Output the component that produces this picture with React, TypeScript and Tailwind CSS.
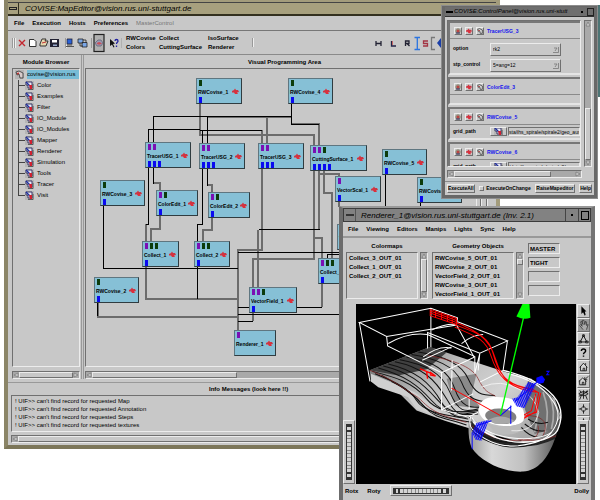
import React from "react";

const raised = "border border-t-[#ececec] border-l-[#ececec] border-b-[#707070] border-r-[#707070]";
const sunken = "border border-t-[#707070] border-l-[#707070] border-b-[#ececec] border-r-[#ececec]";
const sans = "font-['Liberation_Sans',Arial,sans-serif]";

const GREEN = "#0c3c0c";
const PURPLE = "#7a10b4";

type ModuleNode = { name: string; x: number; y: number; w: number; top: string; out: number };

const nodes: ModuleNode[] = [
  { name: "RWCovise_1", x: 196, y: 78, w: 46, top: "g", out: 1 },
  { name: "RWCovise_4", x: 288, y: 78, w: 45, top: "g", out: 1 },
  { name: "TracerUSG_1", x: 145, y: 142, w: 46, top: "pp", out: 3 },
  { name: "TracerUSG_2", x: 199, y: 143, w: 46, top: "pp", out: 3 },
  { name: "TracerUSG_3", x: 258, y: 143, w: 46, top: "pp", out: 3 },
  { name: "CuttingSurface_1", x: 310, y: 145, w: 57, top: "ppg", out: 4 },
  { name: "RWCovise_5", x: 382, y: 149, w: 45, top: "g", out: 1 },
  { name: "VectorScal_1", x: 335, y: 176, w: 46, top: "p", out: 1 },
  { name: "RWCovise_6", x: 417, y: 177, w: 45, top: "g", out: 1 },
  { name: "RWCovise_3", x: 100, y: 180, w: 45, top: "g", out: 1 },
  { name: "ColorEdit_1", x: 156, y: 190, w: 42, top: "pg", out: 1 },
  { name: "ColorEdit_2", x: 208, y: 192, w: 42, top: "pg", out: 1 },
  { name: "VectorField_2", x: 337, y: 224, w: 48, top: "p", out: 1 },
  { name: "Collect_1", x: 142, y: 241, w: 37, top: "pgg", out: 1 },
  { name: "Collect_2", x: 194, y: 241, w: 36, top: "pgg", out: 1 },
  { name: "Collect_3", x: 318, y: 258, w: 36, top: "pgg", out: 1 },
  { name: "RWCovise_2", x: 94, y: 277, w: 45, top: "g", out: 1 },
  { name: "VectorField_1", x: 249, y: 287, w: 48, top: "ppg", out: 1 },
  { name: "Renderer_1", x: 234, y: 330, w: 42, top: "p", out: 0 },
];

function Hand({ size = 7 }: { size?: number }) {
  return (
    <svg width={size} height={size} viewBox="0 0 7 7" className="shrink-0">
      <path d="M0 3L2 2L3 0.5L4 2L6 2L7 4L5 4.500L6 6L3 6L2 4.500L0 4.500Z" fill="#dc2f3c" />
      <path d="M3 2L4 3M1 3.500H2M5 3H6" stroke="#8b5060" strokeWidth="0.600" />
    </svg>
  );
}

function NodeBox({ n }: { n: ModuleNode }) {
  return (
    <div
      className="absolute flex h-[26px] flex-col justify-between overflow-hidden border border-t-[#5f7680] border-l-[#5f7680] border-b-[#303c40] border-r-[#303c40] bg-[#86c0d6] pt-px"
      style={{ left: n.x - 86, top: n.y - 69, width: n.w }}
    >
      <div className="flex h-[6px] gap-[2px] pl-[2px]">
        {n.top.split("").map((c, i) => (
          <span key={i} className="w-[3px]" style={{ background: c === "g" ? GREEN : PURPLE }} />
        ))}
      </div>
      <div className="flex items-center justify-between pr-[2px] pl-px">
        <span className="text-[5px] leading-[8px] font-bold">{n.name}</span>
        <Hand />
      </div>
      <div className="flex h-[6px] gap-[2px] pl-[2px]">
        {Array.from({ length: n.out }, (_, i) => (
          <span key={i} className="w-[3px] bg-[#0a0af0]" />
        ))}
      </div>
    </div>
  );
}

function Wires() {
  return (
    <svg className="absolute inset-0" width="392" height="296" viewBox="86 69 392 296" fill="none" shapeRendering="crispEdges">
      <g stroke="#6c6c6c" strokeWidth="2">
        <path d="M200 104V135H314V145M267 117V143M262 130V143M291 124H319V145M207 117H291" />
        <path d="M160 216V229H151V241M146 224V241M146 267V299H238M153 183H160V190" />
        <path d="M212 218V230H203V241M208 185H212V192M98 303V317H238" />
        <path d="M262 169V250H238V330M314 171V259H253V287M319 171V230M258 230V287" />
        <path d="M324 171V193H332V258M319 174H339V176M314 238H322V258M322 284V307M253 313V321M339 202V207" />
      </g>
      <g stroke="#000" strokeWidth="1">
        <path d="M153.500 142V116.500H291.500M291.500 104V124.500M291.500 124.500H319M148.500 142V129.500H200M200 130.500H262M202.500 130V143M207.500 117V143" />
        <path d="M148.500 168V224.500H146M153.500 168V183.500M202.500 169V224.500H197.500V241M207.500 169V185.500" />
        <path d="M103.500 206V268.500H238M197.500 267V299M97.500 303V316M238 252.500H345M319.500 229.500H258.500" />
        <path d="M322 307.500H238M253 321.500H238M238 314.500H345M327.500 258V254.500H345M385.500 175V207M420.500 203V207" />
      </g>
    </svg>
  );
}

function ArrowTip({ d }: { d: string }) {
  return (
    <svg width="6" height="6" viewBox="0 0 6 6" className="block shrink-0">
      <path d={d} fill="#cfcfcf" stroke="#777" strokeWidth="0.700" />
    </svg>
  );
}

function ScrollH({ thumb, className = "" }: { thumb: string; className?: string }) {
  return (
    <div className={`flex h-[8px] items-center bg-[#a9a9a9] ${sunken} ${className}`}>
      <ArrowTip d="M5 1V5L1 3Z" />
      <div className={`h-full bg-[#c8c8c8] ${raised} ${thumb}`} />
      <span className="ml-auto flex"><ArrowTip d="M1 1V5L5 3Z" /></span>
    </div>
  );
}

function ScrollV({ before, thumb, className = "" }: { before: string; thumb: string; className?: string }) {
  return (
    <div className={`flex w-[8px] shrink-0 flex-col items-center bg-[#a9a9a9] ${sunken} ${className}`}>
      <ArrowTip d="M1 5H5L3 1Z" />
      <div className={before} />
      <div className={`w-full bg-[#c8c8c8] ${raised} ${thumb}`} />
      <span className="mt-auto"><ArrowTip d="M1 1H5L3 5Z" /></span>
    </div>
  );
}

function HostIcon() {
  return (
    <svg width="9" height="9" viewBox="0 0 9 9" className="shrink-0">
      <rect width="9" height="9" fill="#b4b4b4" />
      <path d="M1 2L4 1L8 3L8 8L5 8L4 4L2 5Z" fill="#d8cccc" stroke="#333" strokeWidth="0.800" />
      <path d="M2 3L4 2.500L4 4L2 4.500Z" fill="#c23434" />
    </svg>
  );
}

function FolderIcon() {
  return (
    <svg width="9" height="9" viewBox="0 0 9 9" className="shrink-0">
      <path d="M0 0H9V9H0Z" fill="#b6b6b6" />
      <path d="M1 1H7V7H3V4H1Z" fill="#e8e8f4" stroke="#28285a" strokeWidth="0.900" />
      <path d="M1 1L5 5" stroke="#2030a0" strokeWidth="1.200" />
      <path d="M4 4H7V8H5Z" fill="#d02030" />
      <path d="M8 3V8.500H3" stroke="#444" fill="none" strokeWidth="0.800" />
    </svg>
  );
}

const categories = ["Color", "Examples", "Filter", "IO_Module", "IO_Modules", "Mapper", "Renderer", "Simulation", "Tools", "Tracer", "Visit"];

function ModuleBrowser() {
  return (
    <aside className="flex w-[68px] shrink-0 flex-col">
      <h2 className="h-[13px] text-center text-[6px] leading-[14px] font-bold">Module Browser</h2>
      <div className={`flex-1 overflow-hidden ${sunken}`}>
        <div className="flex h-[11px] items-center gap-[3px] pl-[2px]">
          <HostIcon />
          <button className="flex-1 bg-[#78bcd6] text-left text-[6px] leading-[9px] whitespace-nowrap">covise@vision.rus</button>
        </div>
        <ul className="ml-[5px]">
          {categories.map((c, i) => (
            <li key={c} className="flex h-[11px] items-center">
              <span className="flex h-full w-[7px] flex-col">
                <span className="h-[6px] border-b border-l border-[#444]" />
                <span className={i < categories.length - 1 ? "flex-1 border-l border-[#444]" : "flex-1"} />
              </span>
              <FolderIcon />
              <button className="pl-[3px] text-left text-[6px] leading-[11px]">{c}</button>
            </li>
          ))}
        </ul>
      </div>
      <ScrollH className="mt-[4px]" thumb="flex-1" />
    </aside>
  );
}

function Toolbar() {
  return (
    <div className="flex h-[24px] items-center border-b border-[#8a8a8a] pl-[4px]">
      <svg width="110" height="20" viewBox="12 33 110 20" className="shrink-0">
        <path d="M12.500 38V48M14.500 38V48M65.500 38V48M91.500 38V48M122 38V48" stroke="#999" />
        <path d="M13.500 38V48M15.500 38V48M66.500 38V48" stroke="#eee" />
        <path d="M19 40L25 46M25 40L19 46" stroke="#c3262f" strokeWidth="1.400" />
        <path d="M29.500 39.500H34L36 41.500V46.500H29.500Z" fill="#fff" stroke="#333" />
        <path d="M40 44L42 39H46L45 41H48L46 46H40Z" fill="#e6d8b0" stroke="#333" />
        <path d="M42 43L46 42" stroke="#c23434" />
        <rect x="50.500" y="39.500" width="8" height="7" fill="#223" stroke="#223" />
        <path d="M52 40H57V42.500H52Z" fill="#fff" />
        <path d="M53 44.500H57V46H53Z" fill="#9ac" />
        <rect x="67" y="39" width="5" height="5" fill="#2a62d8" stroke="#223" strokeWidth="0.800" />
        <path d="M66 46.500H74M67 45H72" stroke="#555" />
        <path d="M78 39H83V43H78ZM82 42.500H87V47H82Z" fill="#7aa6e6" stroke="#222" strokeWidth="0.800" />
        <path d="M80 43V46H83M83 40H86V43" stroke="#222" strokeWidth="0.800" fill="none" />
        <rect x="94" y="34.500" width="10" height="17" fill="#b0b0b0" stroke="#222" strokeWidth="1.200" />
        <path d="M95 43L98 40H101L103 43L101 46H97Z" fill="#9a9ab4" stroke="#667" strokeWidth="0.800" />
        <path d="M96.500 43.500C98 41.500 100 41.500 102 43.500C100 45 98 45 96.500 43.500Z" fill="#c8505a" />
        <path d="M110 39L110 46L112 44.500L113.500 47.500L114.500 47L113 44L115 43.500Z" fill="#111" />
        <path d="M115 41C115 39 118 39 118 41C118 42.500 116.500 42 116.500 44M116.500 45.500V47" stroke="#2222a0" strokeWidth="1.300" fill="none" />
      </svg>
      <div className="grid shrink-0 grid-cols-[33px_49px_44px] pl-[4px] text-[6px] leading-[9px] font-bold">
        <span>RWCovise</span><span>Collect</span><span>IsoSurface</span>
        <span>Colors</span><span>CuttingSurface</span><span>Renderer</span>
      </div>
      <svg width="196" height="20" viewBox="251 33 196 20" className="shrink-0">
        <path d="M251.500 38V47" stroke="#999" />
        <path d="M252.500 38V47" stroke="#eee" />
        <g fill="none" strokeWidth="1.300">
          <path d="M375 41V46M380 41V46M375 43.500H380M404.500 46V41H408V43.500H404.500M406 43.500L408.500 46" stroke="#223" />
          <path d="M390.500 41V46H395" stroke="#224" />
          <path d="M391.500 41V45" stroke="#c44" strokeWidth="0.700" />
          <path d="M413.500 37.500H419M413.500 49.500H419M416.300 37.500V49.500" stroke="#2b74e0" />
          <path d="M427 41H422.500V43.500H426.500V46H422" stroke="#a33443" />
          <path d="M434 37.500H430.500V49.500H434" stroke="#777" />
        </g>
        <path d="M436 43L440 38L446 40V47L440 48Z" fill="#1b3fa8" />
      </svg>
    </div>
  );
}

const messages = ["Map", "Annotation", "Steps", "textures"];

function MapEditor() {
  return (
    <section className={`absolute top-0 left-[4px] flex h-[449px] w-[496px] flex-col border-4 border-t-0 border-r-[#a39c7c] border-b-[#7c7659] border-l-[#8b8567] bg-[#c8c8c8] ${sans}`}>
      <div className="h-[3px] border-b border-[#444] bg-[#a39c7c]" />
      <header className="flex h-[13px] items-center border-b-2 border-[#33301f] bg-[#a7a07e]">
        <button aria-label="Window menu" className="flex h-full w-[11px] items-center justify-center border-r border-[#33301f]">
          <span className="h-[3px] w-[8px] border border-[#222]" />
        </button>
        <h1 className="flex-1 pl-[6px] text-[8px] leading-[10px] whitespace-nowrap italic">COVISE:MapEditor@vision.rus.uni-stuttgart.de</h1>
        <button aria-label="Maximize" className="mr-px h-[8px] w-[8px] border border-[#333]" />
      </header>
      <nav className="flex h-[15px] items-center gap-[8px] border-b border-[#777] pl-[6px] text-[6px] font-bold">
        <button>File</button><button>Execution</button><button>Hosts</button><button>Preferences</button>
        <button disabled className="font-normal text-[#777]">MasterControl</button>
      </nav>
      <Toolbar />
      <div className="flex min-h-0 flex-1 pl-[4px]">
        <ModuleBrowser />
        <div className="mx-px w-[3px] border-x border-[#999]" />
        <main className="flex min-w-0 flex-1 flex-col">
          <h2 className="h-[13px] pl-[163px] text-[6px] leading-[14px] font-bold">Visual Programming Area</h2>
          <div className="flex min-h-0 flex-1">
            <div className={`relative min-w-0 flex-1 overflow-hidden ${sunken}`}>
              <Wires />
              {nodes.map((n) => <NodeBox key={n.name} n={n} />)}
            </div>
            <ScrollV className="mr-[8px] ml-[3px]" before="" thumb="h-[200px]" />
          </div>
          <ScrollH className="mt-[4px] mr-[19px]" thumb="w-[145px]" />
        </main>
      </div>
      <footer className="mt-[3px] border-t border-[#999] px-[3px] pb-[2px]">
        <h2 className="h-[12px] pl-[198px] text-[6px] leading-[13px] font-bold">Info Messages (look here !!)</h2>
        <div className={`flex h-[37px] flex-col justify-around py-[2px] pl-[3px] text-[6px] leading-[7px] ${sunken}`}>
          {messages.map((m) => <p key={m}>! UIF&gt;&gt; can't find record for requested {m}</p>)}
        </div>
        <ScrollH className="mt-[3px]" thumb="flex-1" />
      </footer>
    </section>
  );
}

function PanelHeader({ name }: { name: string }) {
  return (
    <div className="flex h-[16px] items-center gap-[3px] border-b border-[#8a8a8a] pl-[4px]">
      <button aria-label={`Configure ${name}`} className={`h-[8px] w-[8px] ${raised}`}>
        <svg width="6" height="6" viewBox="0 0 6 6"><path d="M3 0L5 1L6 3L5 5L3 6L1 5L0 3L1 1Z" fill="#998" /><circle cx="3" cy="3" r="1.500" fill="#b44" /><path d="M1 5H5" stroke="#336" /></svg>
      </button>
      <button aria-label={`Execute ${name}`} className={`h-[8px] w-[8px] ${raised}`}><Hand size={6} /></button>
      <button aria-label={`Help for ${name}`} className={`h-[8px] w-[8px] ${raised}`}>
        <svg width="6" height="6" viewBox="0 0 9 9"><path d="M1 2L4 1L8 3V8H5L4 4L2 5Z" fill="#ddd" stroke="#222" /><path d="M2 3H4V4H2Z" fill="#c22" /></svg>
      </button>
      <h2 className="text-[5px] leading-[8px] font-bold text-[#1414ee]">{name}</h2>
    </div>
  );
}

function Choice({ label, value }: { label: string; value: string }) {
  return (
    <div className="flex h-[16px] items-center pl-[3px]">
      <label htmlFor={label} className="w-[37px] text-[5px] font-bold">{label}</label>
      <div className={`relative h-[13px] w-[71px] ${raised}`}>
        <select id={label} className="block h-full w-full appearance-none px-[2px] text-[5px] leading-[10px]" defaultValue={value}>
          <option>{value}</option>
        </select>
        <svg width="6" height="6" viewBox="0 0 6 6" className="pointer-events-none absolute top-[3px] right-px"><path d="M0 5.500H5.500V0M1 1H4L2 4" fill="none" stroke="#777" strokeWidth="0.800" /></svg>
      </div>
    </div>
  );
}

function PathRow({ id, value }: { id: string; value: string }) {
  return (
    <div className="flex h-[13px] items-center pl-[3px]">
      <label htmlFor={id} className="w-[37px] text-[5px] font-bold">grid_path</label>
      <button aria-label="Browse" className={`flex h-[9px] w-[17px] items-center justify-center overflow-hidden ${raised}`}><FolderIcon /></button>
      <input id={id} defaultValue={value} className={`ml-px h-[9px] min-w-0 flex-1 text-[5px] leading-[7px] ${sunken}`} />
    </div>
  );
}

const group = "mb-[2px] shrink-0 border-2 border-t-[#777] border-l-[#777] border-b-[#e4e4e4] border-r-0";

function ControlPanel() {
  return (
    <section className={`absolute top-[5px] left-[441px] flex h-[194px] w-[157px] flex-col border-4 border-t-2 border-[#686868] bg-[#c8c8c8] outline-1 -outline-offset-1 outline-[#8d8d8d] ${sans}`}>
      <header className="flex h-[10px] items-center border-b border-[#333] bg-[#6e6e6e]">
        <button aria-label="Window menu" className="w-[9px] pl-px"><span className="block h-[2px] w-[7px] bg-black" /></button>
        <h1 className="min-w-0 flex-1 overflow-hidden text-[6px] leading-[9px] whitespace-nowrap italic">COVISE:ControlPanel@vision.rus.uni-stutt</h1>
        <button aria-label="Minimize" className="flex w-[10px] justify-center"><span className="h-[2px] w-[2px] bg-black" /></button>
        <button aria-label="Maximize" className="h-[8px] w-[7px] border border-[#222]" />
      </header>
      <div className="flex min-h-0 flex-1 gap-[3px] px-[2px] pt-[3px]">
        <div className={`flex min-w-0 flex-1 flex-col overflow-hidden ${sunken}`}>
          <div className={group}>
            <PanelHeader name="TracerUSG_3" />
            <div className="pt-[2px]"><Choice label="option" value="rk2" /><Choice label="stp_control" value="5=ang=12" /></div>
          </div>
          <div className={`${group} h-[28px]`}><PanelHeader name="ColorEdit_3" /></div>
          <div className={group}><PanelHeader name="RWCovise_5" /><PathRow id="path5" value="sta/ihs_spirale/spirale2/geo_aus" /></div>
          <div className={group}><PanelHeader name="RWCovise_6" /><PathRow id="path6" value="/data/ihs_spirale/spirale2/v_aus" /></div>
        </div>
        <ScrollV before="h-[82px]" thumb="h-[52px]" />
      </div>
      <ScrollH className="mt-[3px] mr-[12px] mb-[3px] ml-[2px]" thumb="w-[97px]" />
      <footer className="flex h-[14px] shrink-0 items-center justify-between border-t border-[#8a8a8a] px-[2px] text-[5px] leading-[7px] font-bold">
        <button className={raised}>ExecuteAll</button>
        <label className="flex items-center gap-[2px]">
          <input type="checkbox" className={`h-[5px] w-[5px] appearance-none ${raised}`} />ExecuteOnChange
        </label>
        <button className={raised}>RaiseMapeditor</button>
        <button className={raised}>Help</button>
      </footer>
    </section>
  );
}

function Flow() {
  return (
    <svg viewBox="63 27 661 537" preserveAspectRatio="none" className="min-w-0 flex-1 bg-black">
      <defs>
        <linearGradient id="drum" x1="0" x2="1">
          <stop offset="0" stopColor="#999" /><stop offset="0.250" stopColor="#d8d8d8" /><stop offset="0.600" stopColor="#c0c0c0" /><stop offset="0.850" stopColor="#777" /><stop offset="1" stopColor="#444" />
        </linearGradient>
        <linearGradient id="duct" x1="0" y1="0" x2="1" y2="0.600">
          <stop offset="0" stopColor="#666" /><stop offset="0.400" stopColor="#bcbcbc" /><stop offset="0.700" stopColor="#d4d4d4" /><stop offset="1" stopColor="#aaa" />
        </linearGradient>
        <pattern id="hatch" width="6" height="6" patternUnits="userSpaceOnUse" patternTransform="rotate(25)">
          <rect width="4" height="6" fill="#0505ff" />
        </pattern>
      </defs>
      <path d="M104 225L285 155L420 200L505 228L590 250L660 310L680 365L660 425L560 440L410 400L330 375L245 345L190 290L108 258Z" fill="url(#duct)" />
      <path d="M104 225L285 155L335 172L275 222L190 240Z" fill="#404040" />
      <path d="M335 250L425 235L410 300L440 340L360 330Z" fill="#8a8a8a" />
      <path d="M108 235L108 258L130 275L220 305L245 340L340 372L400 392V370L320 350L240 290Z" fill="#cfcfcf" />
      <path d="M402 360C400 400 400 430 410 455C440 500 510 530 565 527C610 522 640 490 662 425L680 365L610 430L500 435Z" fill="url(#drum)" />
      <path d="M580 250L650 300L675 360L655 400L600 415L570 340Z" fill="#707070" />
      <path d="M600 300Q615 350 600 410M625 290Q648 350 630 410M645 300Q665 350 650 400" stroke="#aaa" strokeWidth="5" fill="none" />
      <path d="M410 375Q440 425 540 440Q630 445 670 400L660 430Q600 460 520 450Q430 440 408 400Z" fill="#262626" />
      <g fill="none" stroke="#111" strokeWidth="3">
        <path d="M112 228C180 245 235 260 275 310S380 345 430 350" />
        <path d="M130 218C210 240 250 270 290 315S380 360 430 355" />
        <path d="M145 212C220 230 260 260 305 310S370 350 430 345" />
        <path d="M160 206C240 225 285 260 320 320S390 360 410 365" />
        <path d="M180 199C260 215 300 250 335 310S380 355 420 350" />
        <path d="M195 193C270 207 320 230 345 290S390 350 430 340" />
        <path d="M215 186C285 195 340 220 360 280S410 335 440 335" />
        <path d="M230 178C300 190 360 210 380 260S420 315 450 318" />
        <path d="M250 170C320 180 380 205 400 250S440 300 480 300" />
        <path d="M120 235C180 260 220 275 245 315S350 360 400 370" />
        <path d="M140 240C195 270 230 290 260 325S350 370 410 380" />
        <path d="M170 258C215 280 240 300 270 335S340 368 395 388" />
        <path d="M560 395Q580 420 610 425M570 385Q600 410 630 405M580 370Q610 390 640 380M430 410Q480 450 560 435M440 425Q510 470 600 445" />
      </g>
      <path d="M105 225C180 255 205 280 240 300S270 350 395 380M280 180C350 195 410 210 430 250S460 290 482 302M410 390Q470 435 550 435T665 420M585 360Q650 365 625 420M550 430Q620 440 610 390" fill="none" stroke="#892020" strokeWidth="2" />
      <path d="M432 345C432 300 480 303 510 306C560 312 575 350 566 375C550 400 440 400 432 345Z" fill="#fff" />
      <path d="M450 378Q500 405 560 383L555 408Q520 425 480 408Z" fill="#bbb" />
      <ellipse cx="498" cy="362" rx="47" ry="23" fill="#808080" transform="rotate(5 498 362)" />
      <path d="M458 374Q500 350 540 376Q520 388 480 384Z" fill="#a8a8a8" />
      <g fill="none" stroke="#fff" strokeWidth="3">
        <path d="M73 82L288 40L368 68L365 90L155 124Z" />
        <path d="M73 82L105 258M155 124L158 152L320 232L418 186L365 90M288 40V155" />
        <path d="M160 145Q220 110 278 118M278 160V112L435 174L518 137L368 80M278 118L420 184V235L435 174L430 225M518 137L505 225L435 260" />
        <path d="M320 232V342L415 295M352 195L350 285M262 195L350 155M265 185Q310 150 350 158M380 145Q410 120 445 118M290 105Q330 85 365 88M320 342L400 365L430 350M403 305V340" />
        <path d="M505 225Q610 250 655 300Q695 345 668 405C640 450 480 460 415 378" strokeWidth="4" />
        <path d="M520 235Q610 255 650 310Q690 360 650 410C610 440 460 440 410 365" />
        <path d="M440 275Q500 250 550 280Q600 300 612 350Q600 410 530 405" strokeWidth="2" />
        <path d="M408 362Q400 385 412 400Q470 455 550 450Q630 440 650 410" />
      </g>
      <g fill="none" stroke="#f00">
        <path d="M286 43L365 70V88L286 62ZM286 48L365 76M286 54L365 82M302 48V68M320 54V72M338 60V80M352 64V86" strokeWidth="3" />
        <path d="M360 88C410 110 460 115 475 175S515 270 590 280L612 292L600 350L568 368M360 96C410 120 450 125 468 180S515 280 605 290M364 82C420 105 462 125 482 190S520 270 600 284M618 292L605 350L570 362M603 295L590 345L568 358" strokeWidth="3" />
        <path d="M350 278L497 360" strokeWidth="3" />
        <path d="M255 220L290 235M275 228L278 250M285 230L302 242L285 238" strokeWidth="4" />
      </g>
      <path d="M532 310L548 305L580 260L605 265L570 338L545 332ZM412 410L425 382L462 372L440 435L422 432Z" fill="url(#hatch)" />
      <path d="M605 247L622 240L631 252L626 263L612 265L605 258Z" fill="#0505ff" />
      <path d="M528 330V385M412 410V460M497 360L530 332M540 318L610 257M425 390L470 375M635 228H643L636 238H644" stroke="#0505ff" strokeWidth="3" fill="none" />
      <path d="M497 358L567 65" stroke="#0f0" strokeWidth="4" />
      <path d="M563 27H584L587 68Q568 76 545 64Z" fill="#0f0" />
    </svg>
  );
}

function WheelV() {
  return (
    <div className={`flex h-[64px] w-[12px] items-center justify-center ${raised}`}>
      <div className="flex h-[56px] w-[6px] flex-col justify-between border border-[#333] bg-[#d4d4d4]">
        {Array.from({ length: 14 }, (_, i) => (
          <span key={i} className={i < 2 || i > 11 ? "h-[2px] bg-[#333]" : "h-px bg-[#888]"} />
        ))}
      </div>
    </div>
  );
}

const tools: [string, React.ReactNode][] = [
  ["Select", <path key="a" d="M4 1V10L6 8L8 12L9 11L8 7H10Z" fill="#000" />],
  ["View", <path key="b" d="M6 12L2 7L3 6L5 8L3 3L4 2L6 6L5 1H7L8 6L9 2L10 3L10 7L12 6L10 12" fill="#aaa" stroke="#333" strokeWidth="0.900" />],
  ["Pick", <path key="c" d="M6.500 2.500L10.500 10M6.500 2.500L2.500 10M5.500 1.500H7.500V3.500H5.500ZM1 9H4V11H1ZM9 9H12V11H9ZM4 10H9" fill="none" stroke="#111" strokeWidth="1.100" />],
  ["Help", <path key="d" d="M4 4C4 1 9 1 9 4C9 6 6.500 5.500 6.500 8M6.500 9.500V11" fill="none" stroke="#000" strokeWidth="1.700" />],
  ["Home", <path key="e" d="M2 7L6.500 2L11 7M3 6V11H10V6M6 11V8H8V11M9 2V4" fill="#ddd" stroke="#111" />],
  ["Set home", <path key="f" d="M1 7L5.500 3L10 7M2 6V11H9V6M5 11V8H7V11M12 1L8 5M8 2V5H11" fill="#ddd" stroke="#111" />],
  ["View all", <path key="g" d="M1 5Q6.500 0 12 5Q6.500 10 1 5M2 1L4 4M11 1L9 4M6.500 1V11M4 7L2 12M9 7L11 12M1 8L12 2" fill="#aaa" stroke="#111" />],
  ["Seek", <path key="h" d="M6.500 1V5M6.500 8V12M1 6.500H5M8 6.500H12M3 6.500L6.500 3L10 6.500L6.500 10Z" fill="none" stroke="#111" />],
  ["Camera", <path key="i" d="M2 6Q6.500 0 11 6M6.500 1V6M3 6H10" fill="none" stroke="#111" />],
];

const menu = ["File", "Viewing", "Editors", "Manips", "Lights", "Sync", "Help"];
const colormaps = ["Collect_3_OUT_01", "Collect_1_OUT_01", "Collect_2_OUT_01"];
const geometry = ["RWCovise_5_OUT_01", "RWCovise_2_OUT_01", "VectorField_2_OUT_01", "RWCovise_3_OUT_01", "VectorField_1_OUT_01"];

function ObjectList({ title, items, width, before, thumb }: { title: string; items: string[]; width: string; before: string; thumb: string }) {
  return (
    <div className="flex flex-col">
      <h2 className="h-[11px] text-center text-[6px] leading-[11px] font-bold">{title}</h2>
      <div className="flex h-[47px] gap-[2px]">
        <ul className={`pt-px pl-[2px] text-[6px] leading-[9px] font-bold ${sunken} ${width}`}>
          {items.map((i) => <li key={i}>{i}</li>)}
        </ul>
        <ScrollV before={before} thumb={thumb} />
      </div>
    </div>
  );
}

function Renderer() {
  return (
    <section className={`absolute top-[206px] left-[339px] flex h-[298px] w-[256px] flex-col border-4 border-t-2 border-[#747474] border-t-[#999] border-l-[#6c6c6c] bg-[#c8c8c8] ${sans}`}>
      <header className="flex h-[14px] shrink-0 items-center border border-[#3c3c3c] bg-[#828282]">
        <button aria-label="Window menu" className="flex h-full w-[12px] items-center justify-center border-r border-[#555]"><span className="h-[2px] w-[8px] bg-[#333]" /></button>
        <h1 className="flex-1 pl-[5px] text-[8px] leading-[11px] whitespace-nowrap italic">Renderer_1@vision.rus.uni-stuttgart.de (Inv. 2.1)</h1>
        <button aria-label="Minimize" className="flex h-full w-[13px] items-center justify-center border-l border-[#444]"><span className="h-[2px] w-[2px] bg-black" /></button>
        <button aria-label="Maximize" className="flex h-full w-[12px] items-center justify-center border-l border-[#444]"><span className="h-[9px] w-[8px] border border-black" /></button>
      </header>
      <nav className="flex h-[16px] shrink-0 items-center gap-[8px] border-b-2 border-[#999] pl-[5px] text-[6px] leading-[10px] font-bold">
        {menu.map((m) => <button key={m}>{m}</button>)}
      </nav>
      <div className="flex gap-[4px] pt-[3px] pl-[3px]">
        <ObjectList title="Colormaps" items={colormaps} width="w-[72px]" before="" thumb="h-[33px]" />
        <ObjectList title="Geometry Objects" items={geometry} width="w-[82px]" before="" thumb="h-[6px]" />
        <div className="flex w-[32px] flex-col gap-[3px] pt-[2px]">
          {["MASTER", "TIGHT", "", ""].map((v, i) => (
            <input key={i} aria-label={`Status ${i + 1}`} readOnly defaultValue={v} className={`h-[11px] w-full pl-px text-[6px] leading-[9px] font-bold ${sunken}`} />
          ))}
        </div>
      </div>
      <div className="mt-[5px] flex h-[180px] shrink-0 gap-px pr-px">
        <div className="flex w-[12px] items-end"><WheelV /></div>
        <Flow />
        <div className="flex w-[13px] flex-col">
          <div className="flex min-h-0 flex-1 flex-col overflow-hidden">
            {tools.map(([label, icon]) => (
              <button key={label} aria-label={label} className={`h-[14px] w-full shrink-0 ${raised} ${label === "View" ? "bg-[#999]" : ""}`}>
                <svg width="11" height="12" viewBox="0 0 13 13">{icon}</svg>
              </button>
            ))}
          </div>
          <WheelV />
        </div>
      </div>
      <footer className="flex items-center gap-[9px] px-[2px] pt-px text-[6px] leading-[10px] font-bold">
        <span>Rotx</span><span>Roty</span>
        <div className={`flex h-[11px] w-[62px] items-center justify-center ${raised}`}>
          <div className="flex h-[6px] w-[56px] justify-between border border-[#333] bg-[#d4d4d4]">
            {Array.from({ length: 14 }, (_, i) => (
              <span key={i} className={i < 2 || i > 11 ? "w-[2px] bg-[#333]" : "w-px bg-[#888]"} />
            ))}
          </div>
        </div>
        <span className="ml-auto">Dolly</span>
      </footer>
    </section>
  );
}

export default function App() {
  return (
    <div className="relative h-screen min-h-[500px] w-full overflow-hidden bg-white text-black">
      <MapEditor />
      <div className="absolute top-[5px] right-0 h-[92px] w-[3px] bg-[#4c7474]" />
      <ControlPanel />
      <Renderer />
    </div>
  );
}
